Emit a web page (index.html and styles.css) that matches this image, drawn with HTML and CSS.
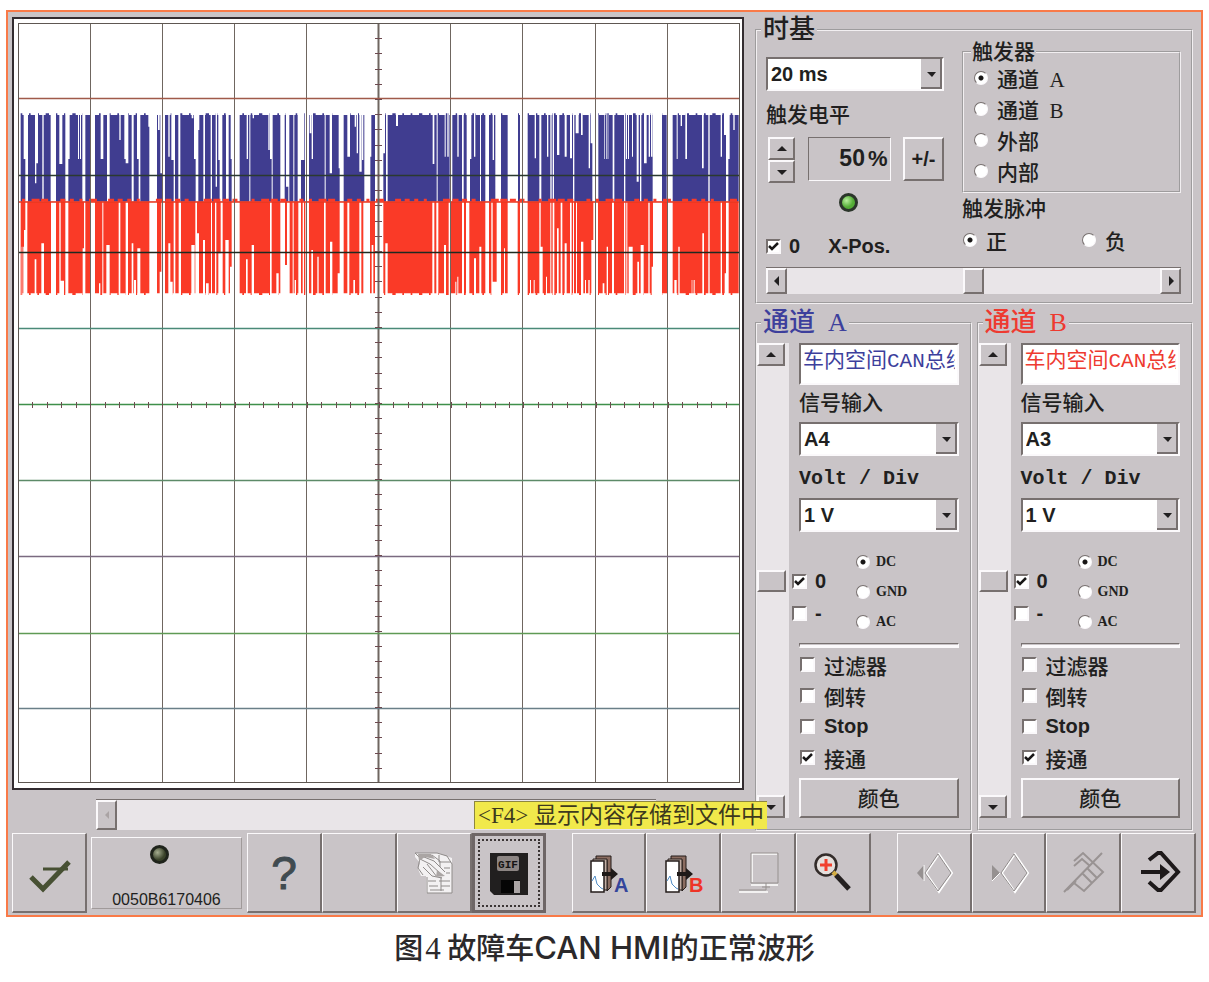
FILE: index.html
```html
<!DOCTYPE html>
<html lang="zh-CN">
<head>
<meta charset="utf-8">
<meta name="viewport" content="width=device-width, initial-scale=1">
<title>CAN HMI 示波器</title>
<link rel="stylesheet" href="styles.css">
</head>
<body>
<main class="panel">
  <div class="workspace">
    <section class="left" aria-label="示波器">
      <svg class="scope" id="scope" viewBox="0 0 732 773" role="img" aria-label="CAN 波形"></svg>
      <div class="hscroll-row">
        <div class="track-off"><button class="arrow side off" type="button" disabled aria-label="向左"><svg viewBox="0 0 8 10"><path d="M6 1v8L2 5z"/></svg></button></div>
        <div class="tip" role="tooltip">&lt;F4&gt; 显示内容存储到文件中</div>
      </div>
    </section>

    <div class="right">
      <fieldset class="group timebase">
        <legend class="title">时基</legend>
        <div class="tb-cols">
          <div class="tb-left">
            <select class="combo" aria-label="时基"><option>20 ms</option></select>
            <div class="caption-label">触发电平</div>
            <div class="level">
              <div class="spin">
                <button class="arrow" type="button" aria-label="增加"><svg viewBox="0 0 10 8"><path d="M0 6h10L5 1z"/></svg></button>
                <button class="arrow" type="button" aria-label="减少"><svg viewBox="0 0 10 8"><path d="M0 2h10L5 7z"/></svg></button>
              </div>
              <output class="readout">50<span>%</span></output>
              <button class="sign" type="button">+/-</button>
            </div>
            <div class="led-row"><span class="led green"></span></div>
            <div class="xpos">
              <label class="opt"><input type="checkbox" checked><span>0</span></label>
              <span>X-Pos.</span>
            </div>
          </div>
          <div class="tb-right">
            <fieldset class="group trigger">
              <legend>触发器</legend>
              <label class="opt"><input type="radio" name="trg" checked><span>通道&nbsp; A</span></label>
              <label class="opt"><input type="radio" name="trg"><span>通道&nbsp; B</span></label>
              <label class="opt"><input type="radio" name="trg"><span>外部</span></label>
              <label class="opt"><input type="radio" name="trg"><span>内部</span></label>
            </fieldset>
            <div class="pulse-label">触发脉冲</div>
            <div class="pulse">
              <label class="opt"><input type="radio" name="pulse" checked><span>正</span></label>
              <label class="opt"><input type="radio" name="pulse"><span>负</span></label>
            </div>
          </div>
        </div>
        <div class="hslider">
          <button class="arrow side" type="button" aria-label="左移"><svg viewBox="0 0 8 10"><path d="M6 0v10L1 5z"/></svg></button>
          <input type="range" aria-label="X-Pos." value="50">
          <button class="arrow side" type="button" aria-label="右移"><svg viewBox="0 0 8 10"><path d="M2 0v10l5-5z"/></svg></button>
        </div>
      </fieldset>

      <div class="channels">
        <fieldset class="group channel blue">
          <legend class="title">通道&nbsp; A</legend>
          <div class="ch-body">
            <div class="vslider">
              <button class="arrow" type="button" aria-label="上移"><svg viewBox="0 0 10 8"><path d="M0 6h10L5 1z"/></svg></button>
              <input type="range" aria-label="通道 A 位置" value="50">
              <button class="arrow" type="button" aria-label="下移"><svg viewBox="0 0 10 8"><path d="M0 2h10L5 7z"/></svg></button>
            </div>
            <div class="ch-main">
              <input class="name" type="text" aria-label="名称" value="车内空间CAN总线">
              <label class="field" for="inA">信号输入</label>
              <select class="combo" id="inA"><option>A4</option></select>
              <label class="field mono" for="vdA">Volt / Div</label>
              <select class="combo" id="vdA"><option>1 V</option></select>
              <div class="coupling">
                <div class="zero">
                  <label class="opt"><input type="checkbox" checked><span>0</span></label>
                  <label class="opt"><input type="checkbox"><span>-</span></label>
                </div>
                <div class="modes">
                  <label class="opt"><input type="radio" name="cA" checked><span>DC</span></label>
                  <label class="opt"><input type="radio" name="cA"><span>GND</span></label>
                  <label class="opt"><input type="radio" name="cA"><span>AC</span></label>
                </div>
              </div>
              <hr>
              <div class="flags">
                <label class="opt"><input type="checkbox"><span>过滤器</span></label>
                <label class="opt"><input type="checkbox"><span>倒转</span></label>
                <label class="opt"><input type="checkbox"><span>Stop</span></label>
                <label class="opt"><input type="checkbox" checked><span>接通</span></label>
              </div>
              <button class="color" type="button">颜色</button>
            </div>
          </div>
        </fieldset>

        <fieldset class="group channel red">
          <legend class="title">通道&nbsp; B</legend>
          <div class="ch-body">
            <div class="vslider">
              <button class="arrow" type="button" aria-label="上移"><svg viewBox="0 0 10 8"><path d="M0 6h10L5 1z"/></svg></button>
              <input type="range" aria-label="通道 B 位置" value="50">
              <button class="arrow" type="button" aria-label="下移"><svg viewBox="0 0 10 8"><path d="M0 2h10L5 7z"/></svg></button>
            </div>
            <div class="ch-main">
              <input class="name" type="text" aria-label="名称" value="车内空间CAN总线">
              <label class="field" for="inB">信号输入</label>
              <select class="combo" id="inB"><option>A3</option></select>
              <label class="field mono" for="vdB">Volt / Div</label>
              <select class="combo" id="vdB"><option>1 V</option></select>
              <div class="coupling">
                <div class="zero">
                  <label class="opt"><input type="checkbox" checked><span>0</span></label>
                  <label class="opt"><input type="checkbox"><span>-</span></label>
                </div>
                <div class="modes">
                  <label class="opt"><input type="radio" name="cB" checked><span>DC</span></label>
                  <label class="opt"><input type="radio" name="cB"><span>GND</span></label>
                  <label class="opt"><input type="radio" name="cB"><span>AC</span></label>
                </div>
              </div>
              <hr>
              <div class="flags">
                <label class="opt"><input type="checkbox"><span>过滤器</span></label>
                <label class="opt"><input type="checkbox"><span>倒转</span></label>
                <label class="opt"><input type="checkbox"><span>Stop</span></label>
                <label class="opt"><input type="checkbox" checked><span>接通</span></label>
              </div>
              <button class="color" type="button">颜色</button>
            </div>
          </div>
        </fieldset>
      </div>
    </div>
  </div>

  <nav class="toolbar" aria-label="工具栏">
    <button class="tool" type="button" aria-label="确认"><svg viewBox="0 0 75 79"><g fill="none" stroke="#475033" stroke-width="5"><path d="M20 44 32 56 58 29"/><path d="M32 36H57" stroke-width="3"/></g></svg></button>
    <div class="status"><span class="led dark"></span><span>0050B6170406</span></div>
    <button class="tool help" type="button">?</button>
    <button class="tool" type="button" aria-label="空"></button>
    <button class="tool" type="button" aria-label="打印">
      <svg viewBox="0 0 75 79"><path d="M19 20H42L56 25V60H30V43H25L22 36 24 30 19 24Z" fill="#f3f1f2"/><g fill="none" stroke="#8f8b8a" stroke-width="1"><path d="M19 20H41L51 23 56 31V60H31V44"/><path d="M19 20 24 25 22 35 27 42M24 26 34 31 44 40M28 24 38 28 49 39M27 34 36 43 46 45M31 31 41 44M36 22 44 28V34M43 22V29H55M32 48H40M43 48H54M33 53H42M45 53H54M34 57H48M48 35H54M50 40H54M45 44V58"/></g><path d="M22 21h13l4 5-10-2-6 4zM41 37l8 6-9 1z" fill="#aaa5a4"/></svg>
    </button>
    <button class="tool active" type="button" aria-label="存储 GIF">
      <svg viewBox="0 0 75 79"><path d="M19 19H57V61H23L19 57Z" fill="#211f1f"/><rect x="26" y="22" width="22" height="15" rx="2" fill="#8c8583"/><text x="37" y="34" text-anchor="middle" class="gif">GIF</text><path d="M30 46H49V59H30Z" fill="#050505"/><path d="M43 47h6v12h-6z" fill="#aaa4a4"/></svg>
    </button>
    <button class="tool gap" type="button" aria-label="存储通道 A">
      <svg viewBox="0 0 75 79"><g stroke="#241d1b"><path d="M25 23H40V54L36 58V27H25Z" fill="#8b6d61"/><path d="M22 26H36V57H22Z" fill="#c1aea4"/><path d="M20 28H33V59H20Z" fill="#fff" stroke-width="1.5"/></g><path d="M21 48 24 43 26 51 30 55 32 56" fill="none" stroke="#4e8bc5"/><path d="M31 39H40V35L47 41 40 47V43H31Z" fill="#1f1a18"/><text x="43" y="59" class="letter a">A</text></svg>
    </button>
    <button class="tool" type="button" aria-label="存储通道 B">
      <svg viewBox="0 0 75 79"><g stroke="#241d1b"><path d="M25 23H40V54L36 58V27H25Z" fill="#8b6d61"/><path d="M22 26H36V57H22Z" fill="#c1aea4"/><path d="M20 28H33V59H20Z" fill="#fff" stroke-width="1.5"/></g><path d="M21 48 24 43 26 51 30 55 32 56" fill="none" stroke="#4e8bc5"/><path d="M31 39H40V35L47 41 40 47V43H31Z" fill="#1f1a18"/><text x="43" y="59" class="letter b">B</text></svg>
    </button>
    <button class="tool" type="button" aria-label="窗口">
      <svg viewBox="0 0 75 79"><g fill="none"><path d="M31 49V21H56M18 59H47M30 52H57" stroke="#fff" stroke-width="1.5"/><path d="M30 50V20H57V50ZM18 57H45V50M41 54H49" stroke="#96918f"/></g></svg>
    </button>
    <button class="tool" type="button" aria-label="放大">
      <svg viewBox="0 0 75 79"><circle cx="31" cy="32" r="10.5" fill="#e5dfdc" stroke="#332c2a" stroke-width="2.5"/><path d="M31 26V38M25 32H37" stroke="#f1402d" stroke-width="3"/><path d="M38 39 42 43" stroke="#d3ad43" stroke-width="4"/><path d="M41 42 54 56" stroke="#242020" stroke-width="5"/></svg>
    </button>
    <button class="tool gap" type="button" aria-label="上一个">
      <svg viewBox="0 0 75 79"><path d="M21 40 28 32V48Z" fill="#969191"/><path d="M28 32V48" stroke="#fff"/><path d="M43 21 56 40 43 59 30 40Z" fill="none" stroke="#fff" stroke-width="2"/><path d="M42 21 55 40 42 58 29 40Z" fill="none" stroke="#8f8a8a"/></svg>
    </button>
    <button class="tool" type="button" aria-label="下一个">
      <svg viewBox="0 0 75 79"><path d="M21 32 29 40 21 48Z" fill="#969191"/><path d="M21 48 29 40" stroke="#fff"/><path d="M44 21 57 40 44 59 31 40Z" fill="none" stroke="#fff" stroke-width="2"/><path d="M43 21 56 40 43 58 30 40Z" fill="none" stroke="#8f8a8a"/></svg>
    </button>
    <button class="tool" type="button" aria-label="清除">
      <svg viewBox="0 0 75 79"><g fill="none" stroke="#999393" stroke-width="2"><path d="M28 28 37 20 57 39 38 58 28 50M18 59 56 20M21 57 30 48M36 40 46 50M41 35 51 45M28 33 36 26 44 33"/></g></svg>
    </button>
    <button class="tool" type="button" aria-label="退出">
      <svg viewBox="0 0 75 79"><g fill="none" stroke="#1d191a" stroke-width="4"><path d="M28 27 37 20H40L57 39 40 57H37L28 49"/><path d="M20 39H42"/></g><path d="M39 31 49 39 39 47Z" fill="#1d191a"/></svg>
    </button>
  </nav>
</main>
<p class="figure-caption">图<span class="num">4</span> 故障车<span class="latin">CAN HMI</span>的正常波形</p>
<script src="scope.js"></script>
</body>
</html>
```

FILE: styles.css
```css
* { box-sizing: border-box; }
:root {
  --face: #c9c4c7;
  --light: #fbf9fb;
  --shade: #77706f;
  --track: #e9e5e8;
  --ink: #211f20;
}
body {
  margin: 0;
  padding: 10px 6px 0;
  background: #fff;
  color: var(--ink);
  font-family: "Liberation Serif", "Noto Sans CJK SC", serif;
  font-size: 21px;
}
button, input, select { font: inherit; color: inherit; margin: 0; }
button { padding: 0; }
.panel { border: 2px solid #f97a48; background: var(--face); }
.workspace {
  display: grid;
  grid-template-columns: 732fr 438fr;
  gap: 11px;
  padding: 5px 8px 0 4px;
}
.left, .right { min-width: 0; }
.right { display: flex; flex-direction: column; gap: 2px; }
.scope { display: block; width: 100%; background: #fff; }

/* lower scroll bar and key hint */
.hscroll-row { position: relative; margin-top: 9px; padding-left: 84px; }
.track-off { width: 560px; height: 31px; background: var(--track); border-top: 1px solid var(--shade); }
.tip {
  position: absolute;
  left: 462px;
  top: 2px;
  padding: 0 3px;
  height: 28px;
  line-height: 27px;
  border: 1px solid #8d8740;
  border-width: 1px 0 0 1px;
  background: #f1e94b;
  font-size: 23px;
  white-space: nowrap;
  color: #3d391d;
  z-index: 2;
}

/* raised faces */
.arrow, .sign, .color, .tool {
  background: var(--face);
  border: 2px solid;
  border-color: var(--light) var(--shade) var(--shade) var(--light);
  border-radius: 0;
}
.arrow { display: flex; align-items: center; justify-content: center; width: 28px; height: 23px; }
.arrow svg { width: 10px; height: 8px; fill: var(--ink); }
.arrow.side { width: 21px; height: 27px; }
.arrow.side svg { width: 8px; height: 10px; }
.arrow.off { height: 30px; }
.arrow.off svg { fill: #aaa3a4; }

/* group boxes */
.group {
  min-width: 0;
  margin: 0;
  padding: 0;
  border: 2px groove #f2eff1;
}
legend { padding: 0 1px; line-height: 22px; font-weight: 500; }
legend.title { margin-left: 4px; font-size: 26px; line-height: 26px; padding: 0 2px; }
.timebase > legend.title { margin-left: -5px; }
.timebase { padding: 14px 10px 8px 9px; }
.tb-cols { display: grid; grid-template-columns: 178fr 219fr; gap: 18px; }
.combo {
  appearance: none;
  display: block;
  width: 100%;
  height: 34px;
  padding: 0 24px 0 3px;
  border: 2px solid;
  border-color: var(--shade) var(--light) var(--light) var(--shade);
  border-radius: 0;
  background: #fff url("data:image/svg+xml,%3Csvg xmlns='http://www.w3.org/2000/svg' width='21' height='30'%3E%3Cpath fill='%23c9c4c7' d='M0 0h21v30H0z'/%3E%3Cpath fill='none' stroke='%23777070' stroke-width='2' d='M20 0v29H0'/%3E%3Cpath fill='%23211f20' d='M6 13h9l-4 5z'/%3E%3C/svg%3E") right center no-repeat;
  font: bold 20px "Liberation Sans", sans-serif;
}
.caption-label { height: 26px; margin-top: 11px; line-height: 26px; font-weight: 500; }
.level { display: flex; justify-content: space-between; margin: 9px 0 0 2px; height: 46px; }
.spin .arrow { width: 27px; }
.readout {
  width: 83px;
  height: 44px;
  padding-right: 2px;
  border: 1px solid;
  border-color: var(--shade) var(--light) var(--light) var(--shade);
  text-align: right;
  font: bold 23px/40px "Liberation Sans", sans-serif;
}
.readout span { margin-left: 3px; font-size: 22px; }
.sign { width: 41px; height: 44px; font: bold 20px "Liberation Sans", sans-serif; }
.led { display: block; width: 19px; height: 19px; border-radius: 50%; border: 3px solid #2b352a; }
.led.green { background: radial-gradient(circle at 35% 35%, #b8ef9d, #54ad36 55%); }
.led.dark { background: radial-gradient(circle at 35% 35%, #a5ad8f, #3a432a 60%); border-color: #1f241b; }
.led-row { display: flex; justify-content: center; padding: 10px 14px 0 0; }
.xpos { display: flex; gap: 28px; align-items: center; margin-top: 22px; height: 24px; font: bold 20px "Liberation Sans", sans-serif; }

/* tick boxes and radios */
.opt { display: flex; align-items: center; gap: 9px; font-weight: 500; white-space: nowrap; }
.opt input { appearance: none; flex: none; width: 15px; height: 15px; background: #fff; border: 2px solid; border-color: var(--shade) var(--light) var(--light) var(--shade); }
.opt input[type="radio"] { width: 14px; height: 14px; border-radius: 50%; border-width: 1px; }
.opt input[type="radio"]:checked { background: radial-gradient(circle, #181616 0 2px, #fff 3px); }
.opt input[type="checkbox"]:checked { background: #fff url("data:image/svg+xml,%3Csvg xmlns='http://www.w3.org/2000/svg' viewBox='0 0 11 11'%3E%3Cpath d='M1 5l3 3 6-6' fill='none' stroke='%23181616' stroke-width='2.5'/%3E%3C/svg%3E") center / 11px 11px; }
.xpos .opt { font-weight: bold; gap: 8px; }

.trigger { height: 152px; margin-top: -16px; padding: 0 10px; }
.trigger .opt { height: 31px; }
.trigger legend { margin-left: -3px; margin-bottom: -1px; }
.pulse-label { height: 28px; margin-top: 2px; line-height: 28px; font-weight: 500; }
.pulse { display: grid; grid-template-columns: 119px 1fr; margin-top: 2px; height: 28px; }
.pulse .opt { padding-left: 1px; }

.hslider { display: flex; height: 27px; margin-top: 9px; border-top: 1px solid var(--shade); background: var(--track); }
.hslider input { appearance: none; flex: 1; min-width: 0; height: 26px; background: none; }
.hslider .arrow { height: 26px; }
input[type="range"]::-webkit-slider-thumb { appearance: none; width: 21px; height: 26px; background: var(--face); border: 2px solid; border-color: var(--light) var(--shade) var(--shade) var(--light); }

/* channels */
.channels { display: grid; grid-template-columns: 1fr 1fr; gap: 5px; flex: 1; margin-top: 4px; }
.blue .title, .blue .name { color: #3d3f9c; }
.red .title, .red .name { color: #ee3a30; }
.channel { padding: 7px 11px 11px 0; }
.ch-body { display: grid; grid-template-columns: 32px 1fr; gap: 10px; }
.vslider { display: flex; flex-direction: column; background: var(--track); }
.vslider input { appearance: none; writing-mode: vertical-lr; flex: 1; width: 29px; min-height: 0; height: 0; background: none; }
.vslider input::-webkit-slider-thumb { width: 29px; height: 22px; }
.ch-main { display: flex; flex-direction: column; min-width: 0; }
.name {
  width: 100%;
  height: 42px;
  padding: 0 2px 12px;
  border: 2px solid;
  border-color: var(--shade) var(--light) var(--light) var(--shade);
  background: #fff;
  font-family: "Liberation Mono", "Noto Sans CJK SC", monospace;
}
.field { height: 28px; margin: 4px 0 5px; line-height: 28px; font-weight: 500; }
.field.mono { margin: 9px 0 5px; font: bold 20px/28px "Liberation Mono", monospace; }
.coupling { display: flex; height: 111px; padding-top: 15px; }
.zero { width: 64px; margin-left: -7px; padding-top: 18px; font: bold 20px "Liberation Sans", sans-serif; }
.zero .opt { height: 32px; gap: 8px; font-weight: bold; }
.modes { font-size: 14px; }
.modes .opt { height: 30px; gap: 6px; font-weight: bold; }
hr { width: 100%; height: 5px; margin: 0; border: 1px solid; border-color: var(--shade) var(--light) var(--light) var(--shade); border-bottom-width: 3px; }
.flags { padding: 1px 0 5px 1px; }
.flags .opt { height: 31px; gap: 9px; }
.flags .opt:nth-child(3) { font: bold 20px "Liberation Sans", sans-serif; }
.color { width: 100%; height: 40px; padding-bottom: 3px; font-weight: 500; }

/* tool bar */
.toolbar { display: flex; padding: 2px 5px 2px 4px; }
.tool { flex: 75 1 0; min-width: 0; height: 80px; display: flex; align-items: center; justify-content: center; border-top-width: 1px; border-left-width: 1px; }
.tool svg { width: 75px; height: 79px; flex: none; }
.tool.gap { margin-left: 26px; }
.tool.active { flex-grow: 71; border: 3px solid #6e6666; outline: 2px dotted #3b3535; outline-offset: -8px; }
.status {
  flex: 156 1 0;
  display: flex;
  flex-direction: column;
  align-items: center;
  justify-content: space-between;
  margin: 4px 5px 4px 4px;
  padding: 7px 0 0;
  border: 1px solid;
  border-color: var(--light) #a09a9a #a09a9a var(--light);
  font: 16px/16px "Liberation Sans", sans-serif;
}
.status .led { margin-right: 14px; }
.help { font: 46px "Liberation Sans", sans-serif; color: #404b50; -webkit-text-stroke: 1px #404b50; }
.gif { font: bold 11px "Liberation Mono", monospace; fill: #161414; }
.letter { font: bold 20px "Liberation Sans", sans-serif; }
.letter.a { fill: #34459b; }
.letter.b { fill: #ee3427; }

.figure-caption {
  margin: 8px 0 0;
  text-align: center;
  font: 500 29px/42px "Noto Sans CJK SC", sans-serif;
  color: #2b292b;
}
.figure-caption .latin { font-family: Inter, sans-serif; font-size: 31px; }
.figure-caption .num { font-family: "Liberation Serif", serif; font-weight: normal; font-size: 31px; margin-left: 2px; }
```

FILE: scope.js
```js
// Draws the oscilloscope: two bus signals, the graticule and its ticks.
const NS = "http://www.w3.org/2000/svg";
const scope = document.getElementById("scope");

function add(name, attrs) {
  const node = document.createElementNS(NS, name);
  for (const key in attrs) node.setAttribute(key, attrs[key]);
  scope.appendChild(node);
}

// Sample coordinates are thirds of a pixel; F marks a pause over the full swing.
const F = 335;
const sx = v => v / 3 - 12;
const sy = v => v / 3 + 73;

// Pauses of signal A: start, end, depth.
const pausesA = [
  [71,76,207],[76,84,F],[105,109,280],[109,114,220],[127,131,F],[152,168,F],[178,187,222],[196,205,F],[205,209,207],
  [234,237,207],[240,243,207],[247,256,F],[270,285,F],[302,310,207],[321,329,F],[358,362,150],[373,377,207],[377,385,220],
  [395,401,F],[411,416,207],[416,421,F],[445,449,110],[448,471,F],[474,479,120],[481,486,250],[486,495,F],[505,509,200],
  [514,521,210],[521,525,F],[535,541,F],[575,580,85],[582,587,207],[587,595,F],[595,598,120],[610,615,F],[632,636,F],
  [647,651,290],[655,659,210],[659,667,F],[678,686,F],[692,695,207],[695,719,F],[740,744,207],[748,751,F],[758,762,85],
  [805,809,180],[810,815,207],[815,818,F],[841,854,F],[858,865,290],[865,868,F],[880,883,F],[893,903,F],[903,913,210],
  [915,927,F],[929,934,130],[935,939,207],[974,977,F],[989,996,250],[1016,1019,235],[1019,1031,F],[1042,1050,200],
  [1064,1068,110],[1070,1074,190],[1078,1085,245],[1086,1090,210],[1093,1111,F],[1125,1129,F],[1140,1149,F],[1150,1155,190],
  [1108,1114,200],[1125,1150,F],[1150,1154,190],[1158,1163,F],[1188,1194,108],[1298,1303,222],[1310,1313,F],[1334,1337,200],
  [1342,1346,200],[1349,1357,F],[1372,1376,200],[1386,1391,F],[1400,1410,F],[1410,1414,207],[1422,1426,200],[1440,1443,F],
  [1456,1467,F],[1478,1482,210],[1486,1503,F],[1523,1554,F],[1560,1583,F],[1604,1608,205],[1618,1624,F],[1641,1645,200],
  [1651,1655,F],[1658,1662,F],[1671,1678,195],[1694,1700,200],[1710,1716,205],[1719,1723,F],[1727,1736,130],[1743,1748,135],
  [1766,1770,235],[1772,1777,160],[1777,1795,F],[1813,1815,207],[1818,1820,207],[1823,1825,207],[1838,1843,F],[1872,1876,F],
  [1878,1881,207],[1884,1887,207],[1896,1899,200],[1910,1916,275],[1920,1924,F],[1932,1940,220],[1946,1950,200],[1953,1957,200],
  [1958,1986,F],[2000,2018,F],[2030,2033,207],[2042,2046,108],[2056,2061,207],[2106,2111,235],[2125,2129,F],[2162,2166,200],
  [2172,2178,135],[2178,2185,F],[2185,2189,207],[2200,2204,120]
];
// Pauses of signal B: start, end, height at which they begin.
const pausesB = [
  [65,67,470],[70,72,470],[72,77,420],[76,82,F],[104,109,508],[124,132,460],[153,168,F],[178,182,F],[182,192,572],[196,205,F],
  [248,252,475],[252,256,F],[270,285,F],[297,301,580],[307,310,F],[319,329,465],[356,361,F],[377,384,F],[395,400,460],
  [402,408,570],[412,421,475],[448,471,F],[479,484,545],[484,495,F],[505,511,460],[511,518,575],[521,526,F],[536,543,F],
  [574,584,465],[586,591,F],[591,597,430],[609,615,450],[618,626,580],[633,636,F],[645,649,F],[655,662,490],[662,668,F],
  [676,686,450],[690,695,530],[695,719,F],[738,743,508],[755,762,465],[810,815,F],[829,836,550],[841,855,F],[855,861,525],
  [861,869,F],[878,881,F],[884,888,570],[895,903,F],[908,912,F],[916,927,F],[934,939,480],[952,956,500],[972,977,F],
  [990,997,455],[1013,1019,550],[1019,1031,F],[1042,1048,F],[1060,1065,570],[1078,1084,F],[1090,1110,F],[1115,1120,465],
  [1125,1150,F],[1156,1163,460],[1297,1303,F],[1309,1315,F],[1332,1338,465],[1346,1353,F],[1366,1369,575],[1372,1375,560],
  [1386,1392,F],[1398,1408,F],[1422,1428,505],[1438,1444,470],[1456,1467,F],[1474,1478,F],[1478,1490,575],[1490,1503,F],
  [1512,1515,475],[1523,1553,F],[1560,1583,F],[1590,1593,570],[1601,1604,570],[1618,1622,F],[1622,1628,470],[1638,1641,560],
  [1651,1654,F],[1658,1663,F],[1671,1676,415],[1682,1687,F],[1694,1700,460],[1710,1715,F],[1719,1722,F],[1728,1731,F],
  [1743,1750,455],[1755,1758,570],[1765,1769,570],[1774,1780,450],[1780,1794,F],[1808,1813,580],[1820,1824,470],[1836,1842,F],
  [1872,1876,F],[1879,1882,F],[1886,1898,470],[1912,1917,515],[1922,1931,465],[1945,1949,F],[1955,1959,530],[1959,1986,F],
  [2001,2018,F],[2023,2030,570],[2035,2039,470],[2075,2077,570],[2081,2084,570],[2107,2112,430],[2125,2129,F],[2162,2166,F],
  [2174,2178,550],[2178,2186,F]
];

add("rect", { x: 1, y: 1, width: 730, height: 771, fill: "#fff", stroke: "#332c30", "stroke-width": 2 });

function signal(top, bottom, color, pauses, fromTop) {
  let body = `M${sx(62)} ${sy(F)}`;
  for (let x = 62, i = 0; x < 2216; x += 5, i++) {
    const tooth = (i * 7 + (i >> 2) * 5) % 4 ? 0 : 5;
    const edge = fromTop ? top + 4 - tooth : bottom - 4 + tooth;
    body += `V${sy(edge)}H${sx(Math.min(x + 5, 2216))}`;
  }
  add("path", { d: body + `V${sy(F)}Z`, fill: color });
  const gaps = pauses.map(([a, b, y]) => fromTop
    ? `M${sx(a)} ${sy(60)}H${sx(b)}V${sy(y)}H${sx(a)}Z`
    : `M${sx(a)} ${sy(y)}H${sx(b)}V${sy(625)}H${sx(a)}Z`).join("");
  add("path", { d: gaps, fill: "#fff" });
}
signal(71, F, "#403d90", pausesA, true);
signal(F, 614, "#fa3a27", pausesB, false);
add("path", { d: `M${sx(54)} ${sy(336)}H${sx(2216)}`, stroke: "#e8391f", "stroke-width": 1.5 });
let ripple = "";
for (let i = 0; i < 75; i++) {
  if (i % 5 !== 3) ripple += `M${sx(66 + i * 28.7)} ${sy(331)}h${3 + (i * 5) % 6}`;
}
add("path", { d: ripple, stroke: "#fa3a27", "stroke-width": 3 });

// Graticule
const columns = [78, 150, 222, 294, 366, 438, 510, 583, 655];
const rows = [
  [81, "#a05a4a"], [158, "#2b3a30"], [235, "#1e2a20"], [311, "#4a8a78"], [387, "#3f8f4a"],
  [463, "#5d8a68"], [539, "#7a6a80"], [616, "#5f9a55"], [691, "#6a7f88"]
];
for (const x of columns) add("path", { d: `M${x + .5} 6V766`, stroke: "#6f6660", "stroke-width": x === 366 ? 2 : 1 });
for (const [y, color] of rows) add("path", { d: `M6 ${y + .5}H728`, stroke: color, "stroke-width": 1.5 });
add("rect", { x: 6.5, y: 6.5, width: 721, height: 759, fill: "none", stroke: "#5e5752" });
let ticks = "";
for (let i = 1; i < 50; i++) {
  ticks += `M363 ${Math.round(6 + i * 15.2) + .5}h7`;
  ticks += `M${Math.round(6 + i * 14.44) + .5} 385v6`;
}
add("path", { d: ticks, stroke: "#6d4a50" });
```
